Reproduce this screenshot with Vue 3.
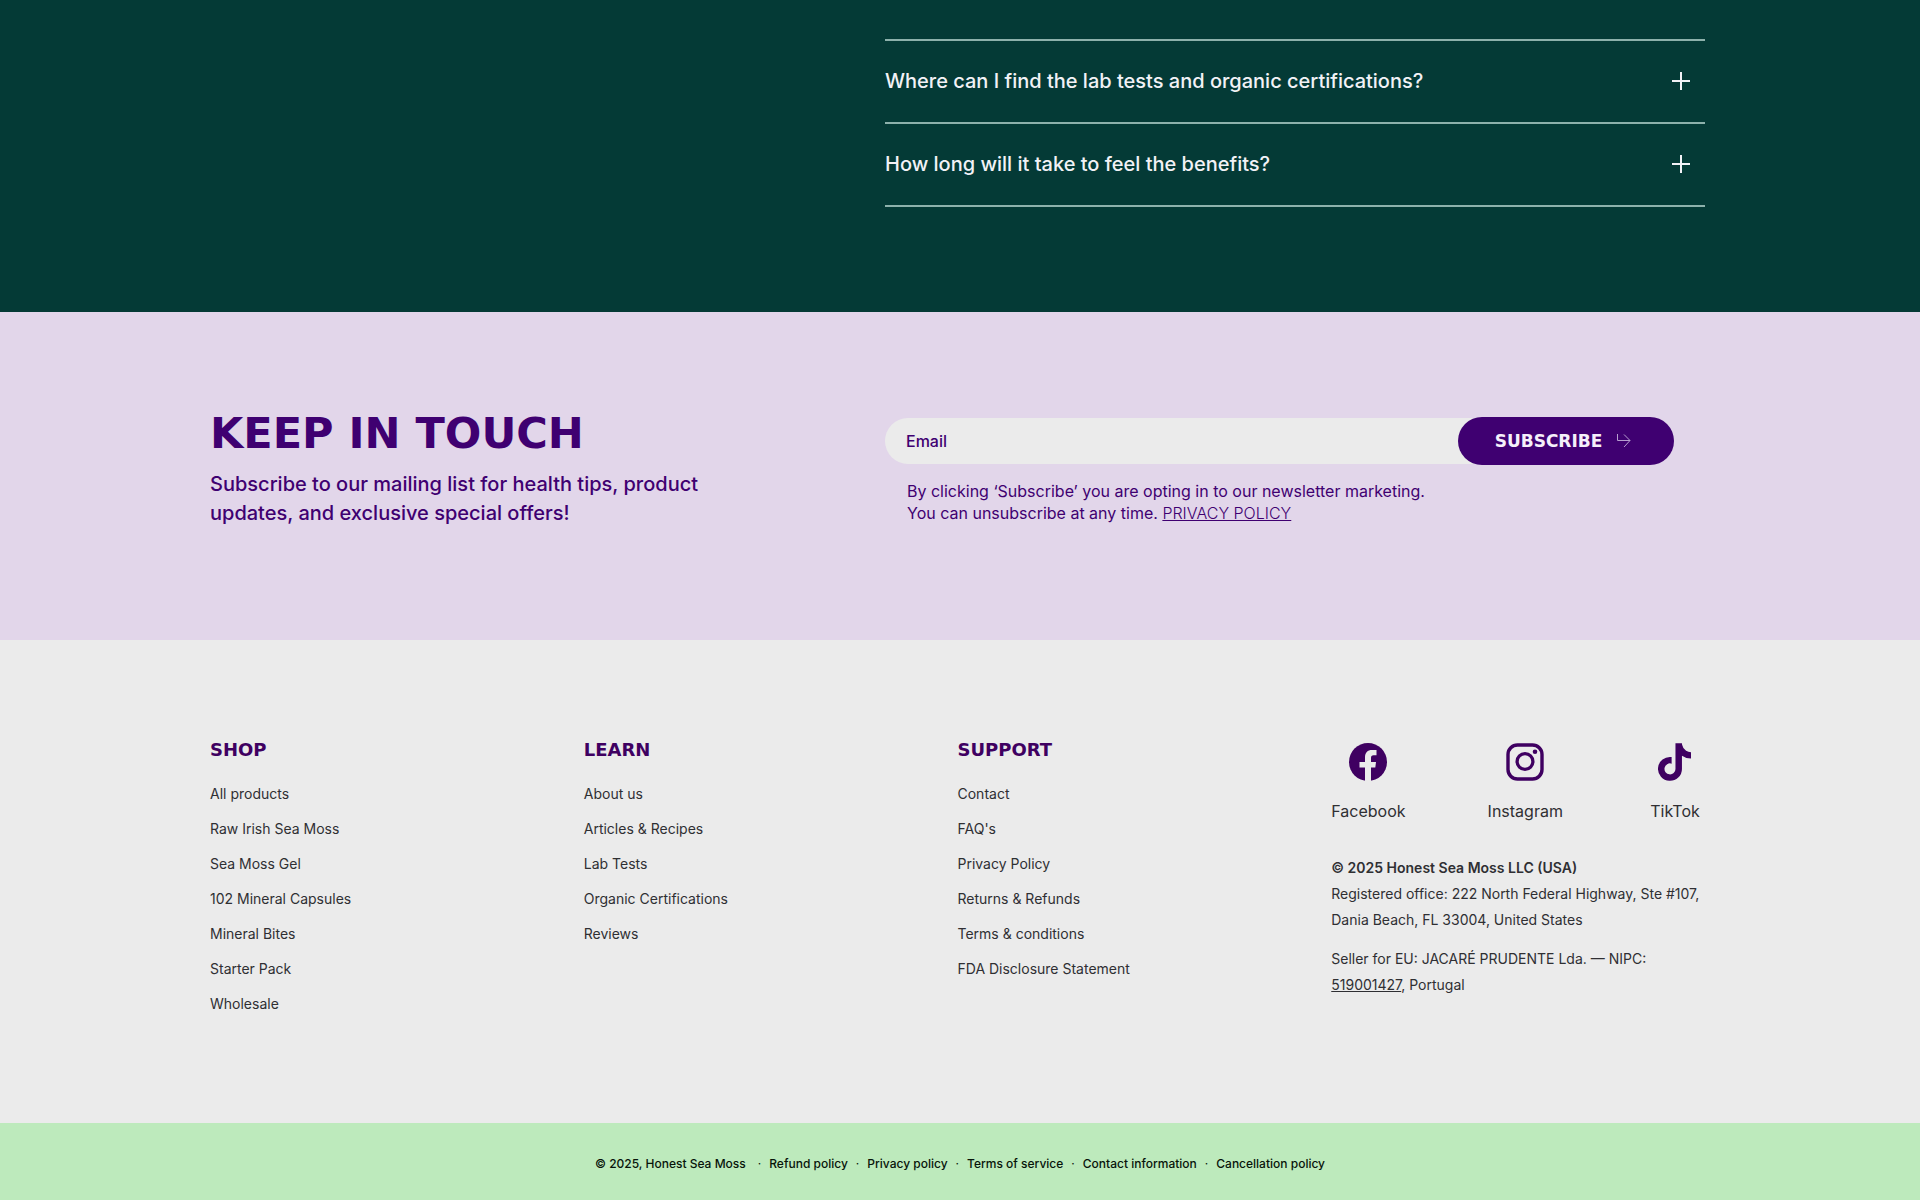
<script setup>
const questions = [
  'Where can I find the lab tests and organic certifications?',
  'How long will it take to feel the benefits?',
]
const menus = [
  {
    title: 'SHOP',
    links: ['All products', 'Raw Irish Sea Moss', 'Sea Moss Gel', '102 Mineral Capsules', 'Mineral Bites', 'Starter Pack', 'Wholesale'],
  },
  {
    title: 'LEARN',
    links: ['About us', 'Articles & Recipes', 'Lab Tests', 'Organic Certifications', 'Reviews'],
  },
  {
    title: 'SUPPORT',
    links: ['Contact', "FAQ's", 'Privacy Policy', 'Returns & Refunds', 'Terms & conditions', 'FDA Disclosure Statement'],
  },
]
const policies = ['Refund policy', 'Privacy policy', 'Terms of service', 'Contact information', 'Cancellation policy']
</script>

<template>
  <div class="page">
    <section class="faq">
      <div class="container split">
        <ul class="questions">
          <li v-for="q in questions" :key="q">
            <button type="button" class="question">
              <span>{{ q }}</span>
              <svg width="18" height="18" viewBox="0 0 18 18" aria-hidden="true">
                <path d="M9 0V18M0 9H18" stroke="#f2f2f6" stroke-width="2" />
              </svg>
            </button>
          </li>
        </ul>
      </div>
    </section>

    <section class="newsletter">
      <div class="container split">
        <div class="intro">
          <h2>KEEP IN TOUCH</h2>
          <p>Subscribe to our mailing list for health tips, product updates, and exclusive special offers!</p>
        </div>
        <form class="signup" @submit.prevent>
          <div class="field">
            <input type="email" placeholder="Email" aria-label="Email" />
            <button type="submit">
              <span>SUBSCRIBE</span>
              <svg width="14" height="14" viewBox="0 0 14 14" fill="none" stroke="#b79fd0" aria-hidden="true">
                <path d="M0.5 0V6.500H13M7 0.500L13 6.500L7 13" />
              </svg>
            </button>
          </div>
          <p>
            By clicking ‘Subscribe’ you are opting in to our newsletter marketing.<br />
            You can unsubscribe at any time. <a href="#">PRIVACY POLICY</a>
          </p>
        </form>
      </div>
    </section>

    <footer>
      <div class="main-footer">
        <div class="container columns">
          <nav v-for="menu in menus" :key="menu.title" :aria-label="menu.title">
            <h3>{{ menu.title }}</h3>
            <ul>
              <li v-for="link in menu.links" :key="link"><a href="#">{{ link }}</a></li>
            </ul>
          </nav>
          <div class="company">
            <div class="social">
              <a href="#">
                <svg width="38" height="38" viewBox="0 0 38 38" aria-hidden="true">
                  <circle cx="19" cy="19" r="19" fill="#3f0061" />
                  <path d="M16 38V24.500H10.500V19H16V14.500C16 9.500 18.500 7 23 7H27.500V12.300H24.500C22.700 12.300 22 13.200 22 15V19H27L26.300 24.500H22V38Z" fill="#ebebeb" />
                </svg>
                Facebook
              </a>
              <a href="#">
                <svg width="38" height="38" viewBox="0 0 38 38" fill="none" stroke="#3f0061" aria-hidden="true">
                  <rect x="2" y="2" width="34" height="34" rx="9.500" stroke-width="3.400" />
                  <circle cx="19" cy="18.500" r="7.900" stroke-width="3.300" />
                  <circle cx="29" cy="8.800" r="2.300" fill="#3f0061" stroke="none" />
                </svg>
                Instagram
              </a>
              <a href="#">
                <svg width="33" height="38" viewBox="0 0 448 512" fill="#3f0061" aria-hidden="true">
                  <path d="M448 209.900a210.100 210.100 0 0 1-122.800-39.300V349.400A162.600 162.600 0 1 1 185 188.300V278.200a74.600 74.600 0 1 0 52.200 71.200V0h88a121.200 121.200 0 0 0 1.900 22.200A122.200 122.200 0 0 0 381 102.400a121.400 121.400 0 0 0 67 20.100z" />
                </svg>
                TikTok
              </a>
            </div>
            <p>
              <strong>© 2025 Honest Sea Moss LLC (USA)</strong><br />
              Registered office: 222 North Federal Highway, Ste #107, Dania Beach, FL 33004, United States
            </p>
            <p>Seller for EU: JACARÉ PRUDENTE Lda. — NIPC: <a href="#">519001427</a>, Portugal</p>
          </div>
        </div>
      </div>
      <div class="legal">
        <span>© 2025, Honest Sea Moss</span>
        <ul>
          <li v-for="p in policies" :key="p"><a href="#">{{ p }}</a></li>
        </ul>
      </div>
    </footer>
  </div>
</template>

<style>
body {
  margin: 0;
  background: #bdeabc;
}
</style>

<style scoped>
.page {
  font-family: Inter, "Liberation Sans", sans-serif;
}
h2, h3, p, ul {
  margin: 0;
  padding: 0;
}
ul {
  list-style: none;
}
a {
  color: inherit;
  text-decoration: none;
}
.container {
  box-sizing: border-box;
  max-width: 1500px;
  margin: 0 auto;
  padding-right: 5px;
}
.split {
  display: grid;
  grid-template-columns: 675fr 820fr;
}
.faq {
  padding: 39px 24px 105px;
  background: #043a36;
}
.questions {
  grid-column: 2;
  border-top: 2px solid #8db1ac;
}
.questions li {
  border-bottom: 2px solid #8db1ac;
}
.question {
  display: flex;
  align-items: center;
  justify-content: space-between;
  width: 100%;
  height: 81px;
  padding: 0 15px 2px 0;
  border: 0;
  background: none;
  color: #f2f2f6;
  font: 500 20px/28px Inter, "Liberation Sans", sans-serif;
  text-align: left;
}
.newsletter {
  padding: 100px 24px 112px;
  background: #e2d6ea;
  color: #3f0071;
}
.intro {
  max-width: 520px;
}
.intro h2 {
  font: 700 43px/42px "DejaVu Sans", sans-serif;
}
.intro p {
  margin-top: 16px;
  font-size: 20px;
  font-weight: 500;
  line-height: 29px;
}
.signup {
  padding-top: 5px;
}
.field {
  display: flex;
  align-items: center;
  margin-right: 31px;
}
.field input {
  flex: 1;
  box-sizing: border-box;
  min-width: 0;
  height: 46px;
  margin-right: -24px;
  padding: 0 44px 0 21px;
  border: 0;
  border-radius: 23px 0 0 23px;
  background: #ebebeb;
  color: #3f0071;
  font: 500 16px Inter, "Liberation Sans", sans-serif;
}
.field input::placeholder {
  color: #3f0071;
  opacity: 1;
}
.field button {
  display: flex;
  align-items: center;
  justify-content: center;
  gap: 15px;
  position: relative;
  width: 216px;
  height: 48px;
  padding: 0 6px 0 0;
  border: 0;
  border-radius: 24px;
  background: #3f0071;
  color: #f5effa;
  font: 700 17px "DejaVu Sans", sans-serif;
}
.signup p {
  margin: 15px 0 0 22px;
  font-size: 16px;
  line-height: 22px;
}
.signup a {
  font-weight: 300;
  text-decoration: underline;
}
.main-footer {
  padding: 100px 24px 102px;
  background: #ebebeb;
  color: #2f2f33;
}
.columns {
  display: grid;
  grid-template-columns: repeat(4, 1fr);
}
.columns h3 {
  margin-bottom: 16px;
  color: #3f0061;
  font: 700 18px/20px "DejaVu Sans", sans-serif;
}
.columns li {
  font-size: 14px;
  line-height: 35px;
}
.social {
  display: flex;
  justify-content: space-between;
  margin-bottom: 32px;
  padding-top: 3px;
}
.social a {
  display: flex;
  flex-direction: column;
  align-items: center;
  gap: 18px;
  min-width: 60px;
  font-size: 16px;
  line-height: 24px;
}
.company p {
  font-size: 14px;
  line-height: 26px;
}
.company p + p {
  margin-top: 13px;
}
.company strong {
  font-weight: 600;
}
.company p a {
  text-decoration: underline;
}
.legal {
  display: flex;
  align-items: center;
  justify-content: center;
  gap: 4px;
  padding: 29px 24px 24px;
  background: #bdeabc;
  color: #08140a;
  font-size: 12px;
  font-weight: 500;
  line-height: 24px;
}
.legal ul {
  display: flex;
}
.legal li::before {
  content: "·";
  margin: 0 8px;
  font-weight: 400;
}
</style>
